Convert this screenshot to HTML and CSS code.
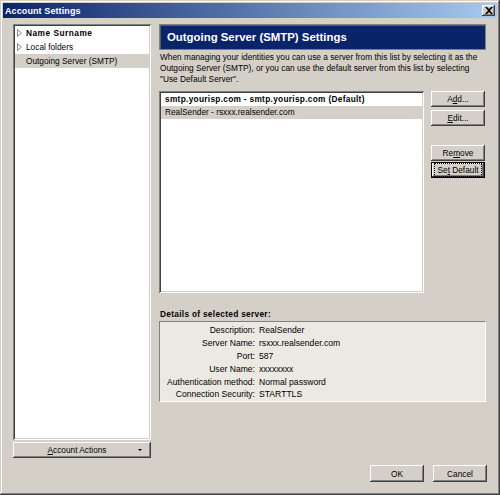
FILE: index.html
```html
<!DOCTYPE html>
<html>
<head>
<meta charset="utf-8">
<link rel="stylesheet" href="styles.css">
</head>
<body>
<div class="window">
  <div class="titlebar">
    <span class="title">Account Settings</span>
    <span class="close"><svg width="8" height="7" viewBox="0 0 8 7"><path d="M0 0h2l2 2 2-2h2L5 3.5 8 7H6L4 5 2 7H0l3-3.5z" fill="#000"/></svg></span>
  </div>
  <div class="content">
    <div class="main">
      <div class="leftcol">
        <div class="tree sunken">
          <div class="tree-item strong"><svg class="twisty" width="5" height="8" viewBox="0 0 5 8"><path d="M0.5 0.5 L4.5 4 L0.5 7.5 Z" fill="#fff" stroke="#8a8a8a" stroke-width="1"/></svg><span>Name Surname</span></div>
          <div class="tree-item"><svg class="twisty" width="5" height="8" viewBox="0 0 5 8"><path d="M0.5 0.5 L4.5 4 L0.5 7.5 Z" fill="#fff" stroke="#8a8a8a" stroke-width="1"/></svg><span>Local folders</span></div>
          <div class="tree-item selected"><span class="no-twisty"></span><span>Outgoing Server (SMTP)</span></div>
        </div>
        <button class="btn actions"><span class="actions-label"><u>A</u>ccount Actions</span><span class="arrow"></span></button>
      </div>
      <div class="rightcol">
        <div class="header">Outgoing Server (SMTP) Settings</div>
        <p class="desc">When managing your identities you can use a server from this list by selecting it as the Outgoing Server (SMTP), or you can use the default server from this list by selecting "Use Default Server".</p>
        <div class="servers">
          <div class="list sunken">
            <div class="list-item strong">smtp.yourisp.com - smtp.yourisp.com (Default)</div>
            <div class="list-item selected">RealSender - rsxxx.realsender.com</div>
          </div>
          <div class="btncol">
            <button class="btn">A<u>d</u>d...</button>
            <button class="btn"><u>E</u>dit...</button>
            <button class="btn gap">Re<u>m</u>ove</button>
            <button class="btn focused"><span class="focus-ring">Se<u>t</u> Default</span></button>
          </div>
        </div>
        <div class="details-label">Details of selected server:</div>
        <div class="details">
          <span class="k">Description:</span><span class="v">RealSender</span>
          <span class="k">Server Name:</span><span class="v">rsxxx.realsender.com</span>
          <span class="k">Port:</span><span class="v">587</span>
          <span class="k">User Name:</span><span class="v">xxxxxxxx</span>
          <span class="k">Authentication method:</span><span class="v">Normal password</span>
          <span class="k">Connection Security:</span><span class="v">STARTTLS</span>
        </div>
      </div>
    </div>
    <div class="footer">
      <button class="btn wide">OK</button>
      <button class="btn wide">Cancel</button>
    </div>
  </div>
</div>
</body>
</html>
```

FILE: styles.css
```css
* { box-sizing: border-box; }
html, body { margin: 0; padding: 0; }
body {
  width: 500px;
  height: 495px;
  overflow: hidden;
  font-family: "Liberation Sans", Arial, sans-serif;
  font-size: 8.3px;
  color: #000;
  background: #d4d0c8;
}
.window {
  width: 500px;
  height: 495px;
  background: #d4d0c8;
  padding: 3px;
  box-shadow: inset -1px -1px #404040, inset 1px 1px #d4d0c8, inset -2px -2px #808080, inset 2px 2px #ffffff;
  display: flex;
  flex-direction: column;
}
.titlebar {
  height: 15px;
  background: linear-gradient(to right, #0a246a, #a6caf0);
  display: flex;
  align-items: center;
  justify-content: space-between;
  padding: 0 2px 0 2px;
  flex: none;
}
.title {
  color: #fff;
  font-weight: bold;
  font-size: 9px;
  letter-spacing: 0.1px;
}
.close {
  width: 13px;
  height: 11px;
  background: #d4d0c8;
  box-shadow: inset -1px -1px #404040, inset 1px 1px #fff, inset -2px -2px #808080;
  display: flex;
  align-items: center;
  justify-content: center;
}
.content {
  flex: 1;
  display: flex;
  flex-direction: column;
  padding: 6px 10px 0 10px;
}
.main {
  height: 434px;
  display: flex;
  gap: 8px;
}
.leftcol {
  width: 138px;
  display: flex;
  flex-direction: column;
  gap: 2px;
}
.sunken {
  background: #fff;
  box-shadow: inset 1px 1px #808080, inset -1px -1px #ffffff, inset 2px 2px #404040, inset -2px -2px #d4d0c8;
  padding: 2px;
}
.tree {
  height: 416px;
}
.tree-item {
  height: 14px;
  display: flex;
  align-items: center;
  padding-left: 2px;
  white-space: nowrap;
}
.twisty {
  margin-right: 4px;
  flex: none;
}
.no-twisty {
  width: 9px;
  flex: none;
}
.strong {
  font-weight: bold;
  letter-spacing: 0.5px;
}
.selected {
  background: #d4d0c8;
}
.btn {
  font-family: inherit;
  font-size: 8.3px;
  color: #000;
  background: #d4d0c8;
  border: none;
  margin: 0;
  padding: 0;
  height: 16px;
  box-shadow: inset -1px -1px #404040, inset 1px 1px #ffffff, inset -2px -2px #808080, inset 2px 2px #d4d0c8;
  display: flex;
  align-items: center;
  justify-content: center;
}
.actions {
  width: 138px;
  position: relative;
}
.actions-label {
  margin-left: -10px;
}
.arrow {
  position: absolute;
  right: 9px;
  top: 7px;
  width: 0;
  height: 0;
  border-left: 2px solid transparent;
  border-right: 2px solid transparent;
  border-top: 2px solid #000;
}
.rightcol {
  width: 327px;
  display: flex;
  flex-direction: column;
}
.header {
  height: 26px;
  background: #0a246a;
  border: 1px solid #808080;
  box-shadow: inset 1px 1px #5a5a5a;
  color: #fff;
  font-weight: bold;
  font-size: 11.4px;
  display: flex;
  align-items: center;
  padding-left: 7px;
}
.desc {
  margin: 2px 0 0 1px;
  line-height: 11px;
  height: 33px;
}
.servers {
  margin-top: 6px;
  display: flex;
  gap: 7px;
}
.list {
  width: 265px;
  height: 202px;
  padding: 2px;
}
.list-item {
  height: 13px;
  line-height: 13px;
  padding-left: 4px;
  white-space: nowrap;
}
.list-item.strong {
  letter-spacing: 0.3px;
}
.btncol {
  width: 54px;
  display: flex;
  flex-direction: column;
  gap: 3px;
}
.btn.gap {
  margin-top: 16px;
}
.btn.focused {
  margin-top: -2px;
  box-shadow: inset 1px 1px #000, inset -1px -1px #000, inset -2px -2px #404040, inset 2px 2px #ffffff, inset -3px -3px #808080;
}
.focus-ring {
  outline: 1px dotted #000;
  outline-offset: 0;
  padding: 1px 2px;
  line-height: 10px;
}
.details-label {
  margin-top: 15px;
  font-weight: bold;
  letter-spacing: 0.3px;
  height: 12px;
  line-height: 12px;
  padding-left: 1px;
}
.details {
  margin-top: 1px;
  height: 81px;
  background: #ece9e3;
  border-top: 1px solid #808080;
  border-left: 1px solid #808080;
  border-right: 1px solid #ffffff;
  border-bottom: 1px solid #ffffff;
  padding-top: 2px;
  display: grid;
  grid-template-columns: 95px 1fr;
  grid-auto-rows: 12.8px;
  column-gap: 4px;
  align-items: center;
  font-size: 8.6px;
}
.k { text-align: right; white-space: nowrap; }
.v { white-space: nowrap; }
.footer {
  margin-top: 7px;
  display: flex;
  justify-content: flex-end;
  gap: 9px;
}
.btn.wide {
  width: 54px;
  height: 17px;
}
```
